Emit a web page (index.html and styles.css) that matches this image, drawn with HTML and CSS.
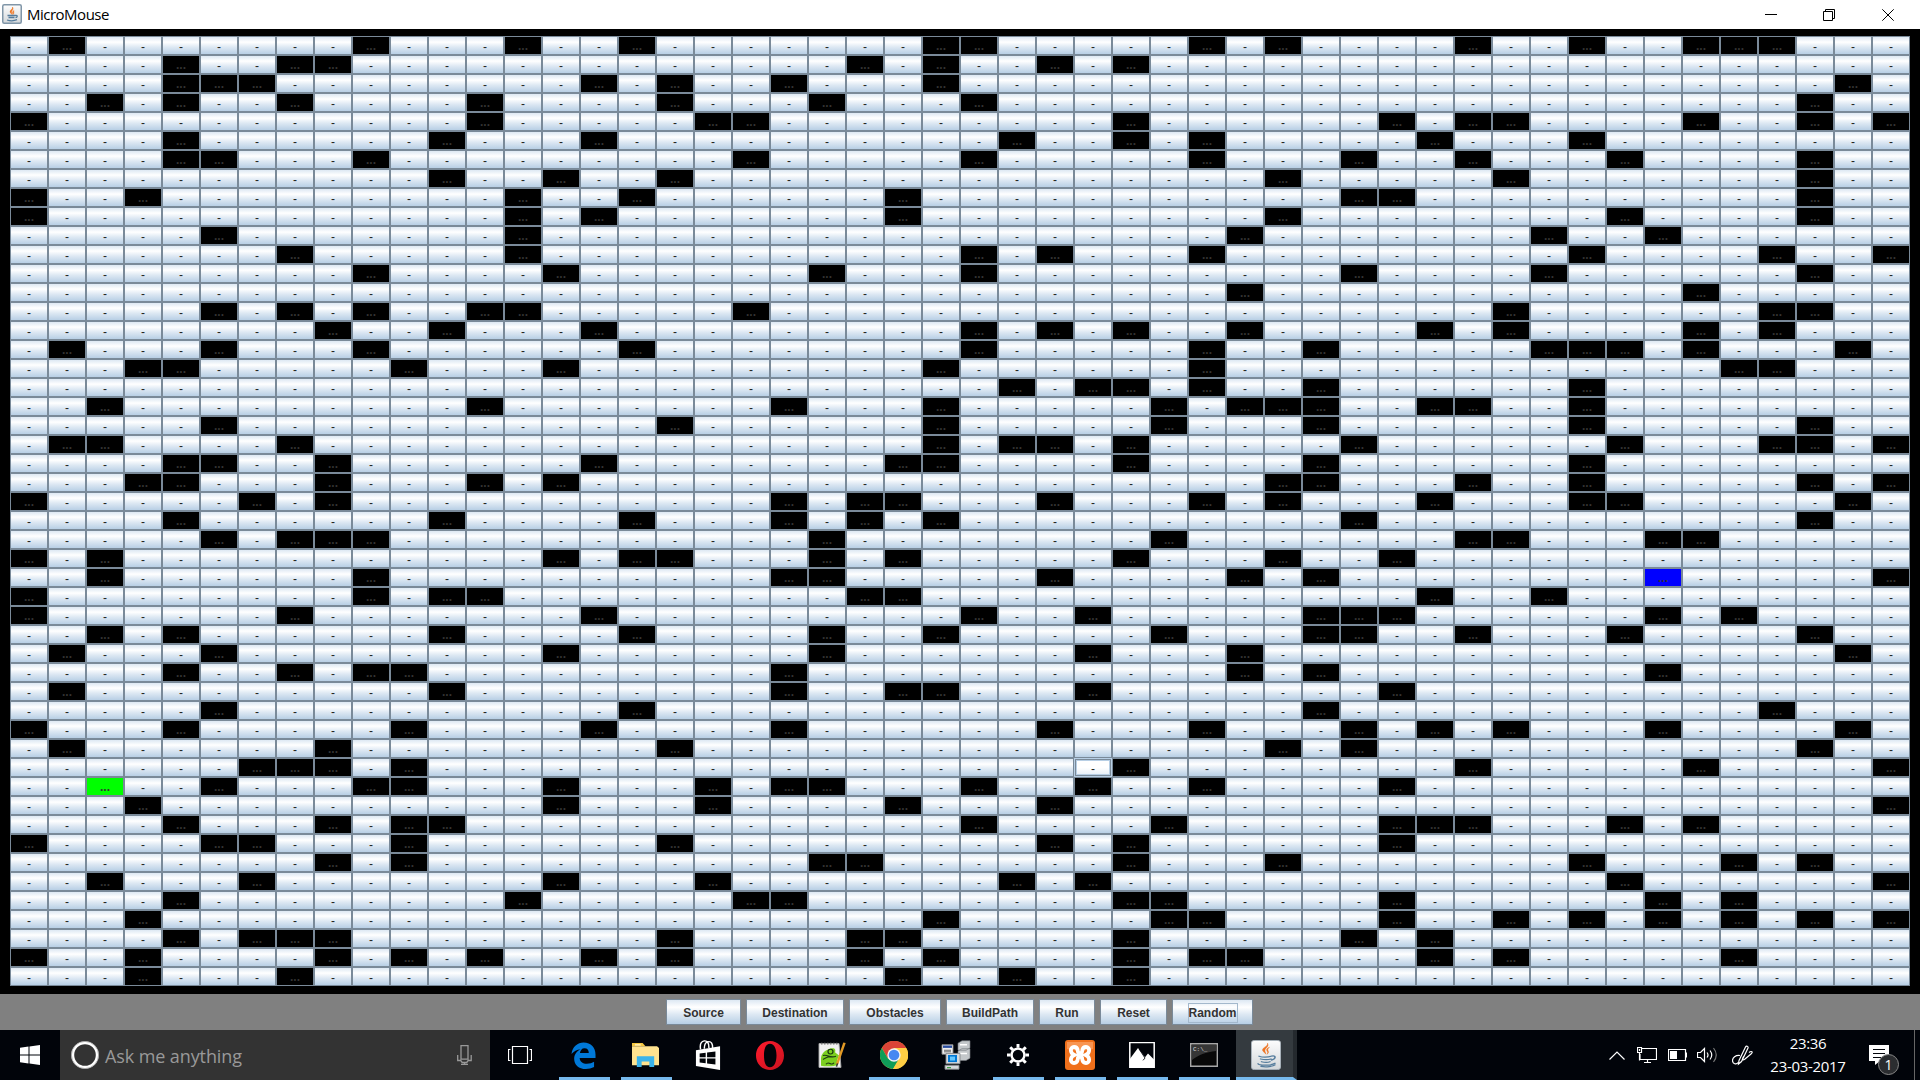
FILE: index.html
```html
<!DOCTYPE html>
<html lang="en">
<head>
<meta charset="utf-8">
<title>MicroMouse</title>
<link rel="stylesheet" href="styles.css">
</head>
<body>
<svg class="defs" width="0" height="0">
  <defs>
    <linearGradient id="tile" x1="0" y1="0" x2="0" y2="1"><stop offset="0" stop-color="#fdfdfd"/><stop offset="1" stop-color="#d3d7da"/></linearGradient>
    <linearGradient id="opera" x1="0" y1="0" x2="1" y2="1"><stop offset="0" stop-color="#ff1b2d"/><stop offset="1" stop-color="#c9131f"/></linearGradient>
  </defs>
</svg>

<header class="titlebar">
  <svg class="app-icon" viewBox="0 0 20 20">
    <rect x=".75" y=".75" width="18.500" height="18.500" rx="1.500" fill="url(#tile)" stroke="#8096a8" stroke-width="1.500"/>
    <path d="M10.500 3c.8 2-2.800 3-2.500 5 .2 1 1.500 1.500 2 2.500-.2-1.500-.6-2-.3-3C10 6.300 12 5 10.500 3zM12 6.500c-1.500 1-1.800 1.500-1 4 1.500-1.500.3-2.500 1-4z" fill="#ee7422" stroke="#ee7422" stroke-width=".5"/>
    <path d="M5.500 11.500h8M6.500 13.500h6M13.500 11.500c2.500-.5 2 2 0 2.200M5 16c3 1 7 1 10-.3" fill="none" stroke="#557c9c" stroke-width="1.300"/>
  </svg>
  <h1 class="title">MicroMouse</h1>
  <div class="controls">
    <svg viewBox="0 0 12 12"><path d="M0 5.500h12"/></svg>
    <svg class="restore" viewBox="0 0 12 12"><path d="M.5 2.500h9v9h-9zM2.500 2.500v-2h9v9h-2"/></svg>
    <svg viewBox="0 0 12 12"><path d="M.3.300l11.400 11.400M11.700.3L.3 11.700"/></svg>
  </div>
</header>

<main class="maze-frame"><div class="maze" id="maze"></div></main>

<nav class="toolbar">
  <button class="metal source">Source</button>
  <button class="metal destination">Destination</button>
  <button class="metal obstacles">Obstacles</button>
  <button class="metal build">BuildPath</button>
  <button class="metal run">Run</button>
  <button class="metal reset">Reset</button>
  <button class="metal random"><span class="focus-ring">Random</span></button>
</nav>

<footer class="taskbar">
  <div class="start"><svg width="20" height="20" viewBox="0 0 20 20"><path fill="#fff" d="M0 2.800L8.500 1.600V9.500H0zM9.500 1.500L20 0v9.500H9.500zM0 10.500h8.500v7.900L0 17.200zM9.500 10.500H20V20L9.500 18.500z"/></svg></div>
  <div class="search">
    <svg width="28" height="28" viewBox="0 0 28 28"><circle cx="14" cy="14" r="12.300" fill="none" stroke="#fff" stroke-width="3"/><circle cx="14" cy="14" r="13.600" fill="none" stroke="#999" stroke-width=".7"/></svg>
    <span class="prompt">Ask me anything</span>
    <svg class="mic" width="15" height="20" viewBox="0 0 15 20"><path d="M4 .7h7v13.500H4zM.7 10v5.500h3l1.500 2h4.500l1.500-2h3V10M7.500 17.500V20M4 19.300h7" fill="none" stroke="#999" stroke-width="1.300"/></svg>
  </div>
  <div class="task view"><svg width="24" height="18" viewBox="0 0 24 18"><path d="M4.500.5h15v17h-15zM2.500 3.500h-2v11h2M21.500 3.500h2v11h-2" fill="none" stroke="#fff" stroke-width="1.200"/></svg></div>
  <div class="apps">
    <div class="app open"><svg width="25" height="27" viewBox="0 0 26 28" preserveAspectRatio="none"><path fill="#0078d7" d="M.5 12.500C1.500 4.500 7 .5 13 .5c8 0 12.500 5.500 12.500 12.500v3.500H9c.2 4 3.300 6 7.500 6 3 0 5.500-.8 7.500-2v5.500c-2.500 1.300-5.500 2-8.500 2C8 28 3.300 23.500 3.300 17.500c0-4.500 2.500-8 6.700-10C6 8 3 9.500.5 12.500zM9.300 11.500h9.200c0-3-1.500-5-4.500-5-2.800 0-4.300 2.200-4.700 5z"/></svg></div>
    <div class="app open"><svg width="27" height="24" viewBox="0 0 28 29" preserveAspectRatio="none"><path fill="#f5c842" d="M0 0h11l3 4H0z"/><path fill="#ffe38f" d="M0 4h26l2 2v21H0z"/><path fill="#fff6d4" d="M3 1.500h6v1.500H3z"/><path fill="#3bb4ea" d="M5 16h18v13h-5v-6.500H10V29H5z"/></svg></div>
    <div class="app"><svg width="26" height="30" viewBox="0 0 28 38" preserveAspectRatio="none"><path d="M6 12C5 5 7 1.500 10 1c3-.3 5 2 5 9M10 11c0-6 2-9 5-9s4 3 4 8" fill="none" stroke="#fff" stroke-width="1.600"/><path fill="#fff" d="M1 13L27 8v30L1 33z"/><path fill="#02050a" d="M5 17l6.500-1v6H5zM13 15.800l9-1.300V22h-9zM5 23.500h6.500v6L5 28.500zM13 23.500h9v7.500l-9-1.300z"/></svg></div>
    <div class="app"><svg width="28" height="29" viewBox="0 0 28 36" preserveAspectRatio="none"><path fill="url(#opera)" fill-rule="evenodd" d="M14 0c8 0 14 8 14 18s-6 18-14 18S0 28 0 18 6 0 14 0zm0 3.500C9.500 3.500 8 10 8 18s1.500 14.500 6 14.500S20.500 26 20.500 18 18.500 3.500 14 3.500z"/></svg></div>
    <div class="app"><svg width="28" height="27" viewBox="0 0 28 34" preserveAspectRatio="none"><path fill="#f2f2f2" stroke="#aaa" d="M1 2h20l2 30H1z"/><path d="M3 2h17" stroke="#777" stroke-width="2" stroke-dasharray="1.500 1.500"/><path fill="#7ccf20" d="M3 20c1-7 5-10 10-12 4-1 5 2 4 5l4 4-2 6 1 6c-4 2-12 2-17 1z"/><path fill="none" stroke="#1d3b12" stroke-width="1.300" d="M5 17c5-2 6 4 13 1M5 22c4-3 5-4 11-3M10 12a2.500 3 0 1 0 5 0 2.500 3 0 0 0-5 0M8 28c3-5 5 3 8-2"/><path d="M26.500 1L19 28" stroke="#e29a25" stroke-width="2.500"/><path d="M19.500 27l-1 4" stroke="#333" stroke-width="1.500"/></svg></div>
    <div class="app open"><svg width="28" height="28" viewBox="0 0 28 28"><circle cx="14" cy="14" r="14" fill="#ffce44"/><path fill="#db4437" d="M1.800 7A14 14 0 0 1 26.200 7H14L7.900 17.500z"/><path fill="#0f9d58" d="M1.800 7A14 14 0 0 0 13 28l6-10.500H7.900z"/><path fill="#ffce44" d="M14 7h12.200A14 14 0 0 1 13 28l7-10.500z"/><circle cx="14" cy="14" r="6.700" fill="#f3f3f3"/><circle cx="14" cy="14" r="5.300" fill="#4688f1"/></svg></div>
    <div class="app"><svg width="30" height="30" viewBox="0 0 30 38" preserveAspectRatio="none"><path fill="#c3c7ca" stroke="#74797d" stroke-width=".7" d="M17 4l4-3h8v9l-4 3h-8zM17 14l4-3h8v12l-4 3h-8z"/><path d="M19 6h7M19 17h7" stroke="#fff" stroke-width="2"/><path fill="#eee" stroke="#888" d="M1 6h11v12H1z"/><path fill="#284b9d" d="M2 7h9v3H2z"/><path d="M3 13h7M3 15h7" stroke="#555"/><path fill="#d7dade" stroke="#85898c" d="M5 17h14v13H5zM4 32h14v5H4z"/><path fill="#0077d4" d="M7 19h9v9H7z"/><path fill="#64c7ff" d="M9 21h5v5H9z"/><path d="M6 35h4" stroke="#3b9c42" stroke-width="1.500"/></svg></div>
    <div class="app open"><svg width="22" height="22" viewBox="-12 -12 24 24"><g fill="none" stroke="#fff"><circle r="7" stroke-width="2.600"/><path stroke-width="3.200" d="M0-8V-12M0 8V12M8 0H12M-8 0H-12M5.600-5.600L8.500-8.500M-5.600-5.600L-8.500-8.500M5.600 5.600L8.500 8.500M-5.600 5.600L-8.500 8.500"/></g></svg></div>
    <div class="app open"><svg width="30" height="30" viewBox="0 0 30 30"><rect width="30" height="30" rx="3" fill="#f0701b"/><path d="M2 2h26v7c-8 2-18 2-26 0z" fill="#f89552"/><path d="M9.500 15C4.500 13 5 7 9 7c4 0 3.500 3 4 5 .3 1.500 3.700 1.500 4 0 .5-2 0-5 4-5s4.500 6-.5 8c5 2 4.500 8 .5 8s-3.500-3-4-5c-.3-1.500-3.700-1.500-4 0-.5 2 0 5-4 5s-4.500-6 .5-8z" fill="none" stroke="#fff" stroke-width="3.800"/></svg></div>
    <div class="app open"><svg width="26" height="26" viewBox="0 0 26 34" preserveAspectRatio="none"><path fill="none" stroke="#fff" stroke-width="1.500" d="M.8.800h24.400v32.400H.8z"/><path fill="#fff" d="M1 22l8-14 7 12 3-5 6 8v10H1z"/><path d="M10 9l6 12-2 3" stroke="#03070d" fill="none"/></svg></div>
    <div class="app open"><svg width="28" height="24" viewBox="0 0 28 24"><path d="M.7.700h26.600v22.600H.7z" fill="#080808" stroke="#a7a7a7" stroke-width="1.400"/><path d="M2 2h24v6C16 9 8 12 2 17z" fill="#555" fill-opacity=".6"/><text class="drive" x="3" y="8">C:\_</text></svg></div>
    <div class="app open active"><svg width="30" height="30" viewBox="0 0 30 38" preserveAspectRatio="none">
      <rect x=".5" y=".5" width="29" height="37" rx="3" fill="url(#tile)" stroke="#aab4bd"/>
      <path d="M16.500 4c1 4-5.500 5.500-5 9 .3 2 2.500 3 3.500 5-.5-2.500-1.500-3.500-1-5.500C14.500 10 18.500 8 16.500 4zM18.500 9c-2.500 1.500-3.500 3-2.500 5 .8 1.500 1 2.500 0 4 3-2.500.5-4.500.8-6 .2-1.200 1-2 1.700-3z" fill="#ee7422" stroke="#ee7422" stroke-width=".5"/>
      <path d="M8 20.500c3 1.200 9 1.200 13-.2M9.500 24c3.500 1 8 1 10.500 0M10.500 27.500c3 1 6.500 1 8.500 0M20.500 20.500c4.500-1.500 5 3 0 5M7 30c1 2.500 14 2.500 17-.5M10 33.500c5 1 12 .2 14-2" fill="none" stroke="#557c9c" stroke-width="1.500" stroke-linecap="round"/>
    </svg></div>
  </div>
  <div class="tray">
    <svg class="caret" width="16" height="9" viewBox="0 0 16 9"><path d="M.5 8.500L8 1l7.500 7.500"/></svg>
    <svg class="net" width="20" height="16" viewBox="0 0 20 16"><path d="M5 1.500h14.500v11H3V7M10.500 12.500v3M7 15.500h7M.5.500h4v5h-4zM2.500 5.500v8M2.500 2v2"/></svg>
    <svg class="battery" width="19" height="12" viewBox="0 0 19 12"><path d="M.5.500h17v11H.5zM18.500 3.500v5"/><path fill="#fff" stroke="none" d="M2 2h7v8H2z"/></svg>
    <svg class="volume" width="20" height="18" viewBox="0 0 20 18"><path d="M.5 6.500h3l4-4v13l-4-4h-3zM10 6.500q2 2.500 0 5M13 4.500q3.500 4.500 0 9"/><path stroke="#777" d="M16.500 2q5.500 7 0 14"/></svg>
    <svg class="pen" width="21" height="21" viewBox="0 0 21 21"><path d="M7 15.500L13.500 2c.8-1.500 3-.8 2.500 1L9.500 16.500 6.500 19zM8 10.500c-4.500-.5-7.500 2-7.500 5 0 3.500 4 4.500 5.500 2M12.500 10.500c-3 3.500-3 6 .5 3.500l6-5c2.500-2 .5-3.500-2-1.500"/></svg>
    <div class="clock"><span>23:36</span><span>23-03-2017</span></div>
    <div class="notes">
      <svg width="20" height="20" viewBox="0 0 20 20"><path fill="#fff" stroke="none" d="M0 0h20v16h-9l-5 4v-4H0z"/><path stroke="#02050a" d="M4 4.500h12M4 8.500h12M4 12.500h8"/></svg>
      <span class="badge">1</span>
    </div>
    <div class="desktop-edge"></div>
  </div>
</footer>
<script src="maze.js"></script>
</body>
</html>
```
FILE: maze.js
```js
// Blocked columns for each of the 50 rows.
const walls = [
  [1,9,13,16,24,25,31,33,38,41,44,45,46],
  [4,7,8,22,24,27,29],
  [4,5,6,15,17,20,24,48],
  [2,4,7,12,17,21,25,47],
  [0,12,18,19,29,36,38,39,44,47,49],
  [4,11,15,26,29,31,37,41],
  [4,5,9,19,25,31,35,38,42,47],
  [11,14,17,33,39,47],
  [0,3,13,16,23,35,36,47],
  [0,13,15,23,33,42,47],
  [5,13,32,40,43],
  [7,13,25,27,31,41,46,49],
  [9,14,21,25,35,40,47],
  [32,44],
  [5,7,9,12,13,19,39,46,47],
  [8,11,15,25,27,29,32,37,39,44,46],
  [1,5,9,16,25,31,34,40,41,42,44,48],
  [3,4,10,14,24,31,45,46],
  [26,28,29,31,34,41],
  [2,12,20,24,30,32,33,34,37,38,41],
  [5,17,24,30,34,41,47],
  [1,2,7,24,26,27,29,35,42,46,47,49],
  [4,5,8,15,23,24,29,34,41],
  [3,4,8,12,14,33,34,38,41,47,49],
  [0,6,8,20,22,23,27,31,33,37,41,42,48],
  [4,11,16,20,22,24,35,47],
  [5,7,8,9,21,30,38,39,43,44],
  [0,2,14,16,17,21,23,29,33,36],
  [2,9,20,21,27,32,34,49],
  [0,9,11,12,22,23,37,40],
  [0,7,15,25,28,34,35,36,43,45],
  [2,4,11,16,21,24,30,34,35,38,42,47],
  [1,5,14,21,28,32,48],
  [4,7,9,10,20,32,34,43],
  [1,11,20,23,24,28,36],
  [5,16,34,46],
  [0,4,10,15,20,27,31,35,37,39,43,48],
  [1,8,17,33,35,47],
  [6,7,8,10,29,38,44,49],
  [5,9,10,14,18,20,21,25,28,31,36],
  [3,14,18,23,27,49],
  [4,8,10,11,25,30,36,37,38,42,44],
  [0,5,6,10,17,27,29,36],
  [8,10,21,22,29,33,41,45,47],
  [2,6,14,18,26,28,42,49],
  [4,13,19,20,29,30,36,43,45],
  [3,24,30,31,36,39,41,43,45,47,49],
  [4,6,7,8,17,22,23,29,35,37],
  [0,3,8,10,12,15,17,22,24,29,31,32,37,39,45],
  [3,7,23,26,29]
];
const special = { "39,2": "source-cell", "28,43": "goal-cell", "38,28": "hover-cell" };

const maze = document.getElementById("maze");
walls.forEach((blocked, row) => {
  for (let col = 0; col < 50; col++) {
    const cell = document.createElement("div");
    const kind = special[row + "," + col];
    const wall = blocked.includes(col);
    const filled = wall || (kind && kind !== "hover-cell");
    cell.className = "cell " + (filled ? "filled" : "free") + (wall ? " wall" : "") + (kind ? " " + kind : "");
    cell.textContent = filled ? "..." : "-";
    maze.appendChild(cell);
  }
});
```
FILE: styles.css
```css
* { box-sizing: border-box; }
body {
  margin: 0;
  width: 1920px;
  height: 1080px;
  overflow: hidden;
  display: flex;
  flex-direction: column;
  background: #000;
  font-family: "Open Sans", "Noto Sans", sans-serif;
}
.defs { position: absolute; }
svg { display: block; flex: none; }

.titlebar {
  height: 29px;
  flex: none;
  display: flex;
  align-items: center;
  padding-left: 2px;
  background: #fff;
}
.app-icon { width: 20px; height: 20px; margin-bottom: 2px; }
.title { margin: 0 0 1px 5px; font-size: 15px; font-weight: 400; letter-spacing: -0.5px; color: #000; }
.controls { margin-left: auto; margin-right: 26px; display: flex; gap: 46px; }
.controls svg { width: 12px; height: 12px; fill: none; stroke: #000; stroke-width: 1; }
.controls .restore { margin-right: 1px; }

.maze-frame { height: 965px; flex: none; padding: 7px 10px 8px; background: #000; }
.maze { display: grid; grid-template-columns: repeat(50, 38px); grid-auto-rows: 19px; }
.cell, .metal {
  border: 1px solid #7a8a99;
  background: linear-gradient(#dde8f3, #fff 30%, #dde8f3 60%, #b8cfe5);
  color: #333;
  font: bold 12px "Liberation Sans", Arial, sans-serif;
  text-align: center;
}
.filled { line-height: 19px; }
.free { line-height: 20px; font-weight: 400; color: #222; }
.wall { background: #000; }
.source-cell { background: #0f0; }
.goal-cell { background: #00f; }
.hover-cell {
  border-color: #b8cfe5;
  background: linear-gradient(#fff 50%, #e4edf6);
  box-shadow: inset 0 0 0 1px #7a8a99, inset 0 0 0 2px #b8cfe5;
}

.toolbar {
  height: 36px;
  flex: none;
  display: flex;
  justify-content: center;
  gap: 5px;
  padding: 5px 1px 0 0;
  background: #808080;
}
.metal { height: 26px; padding: 2px 0 0; line-height: 22px; }
.source { width: 75px; }
.destination { width: 98px; }
.obstacles { width: 92px; }
.build { width: 88px; }
.run { width: 56px; }
.reset { width: 67px; }
.random { width: 81px; }
.focus-ring { display: inline-block; height: 18px; line-height: 18px; outline: 1px solid #a3b8cc; outline-offset: 0; }

.taskbar { height: 50px; flex: none; display: flex; background: #01040a; }
.start { width: 60px; display: flex; align-items: center; padding-left: 20px; }
.search { width: 430px; display: flex; align-items: center; padding: 0 18px 0 11px; background: #333; }
.prompt { margin: 1px 0 0 6px; font-size: 18px; letter-spacing: -0.1px; color: #999; }
.mic { margin-left: auto; }
.view { width: 69px; display: flex; align-items: center; padding-left: 18px; }
.apps { display: flex; gap: 11px; }
.app { width: 51px; height: 50px; display: flex; align-items: center; justify-content: center; padding-right: 2px; border-bottom: 3px solid transparent; }
.app svg { margin-top: 3px; }
.open { border-bottom-color: #76b9ed; }
.active { width: 61px; margin-left: -5px; padding: 0 0 0 3px; border-right: 4px solid #24292e; background: #343a3f; }
.drive { font: 6px "Liberation Mono", monospace; fill: #ddd; }

.tray { margin-left: auto; display: flex; align-items: center; }
.tray svg { fill: none; stroke: #fff; stroke-width: 1.2; }
.net { margin-left: 12px; }
.battery { margin-left: 11px; }
.volume { margin-left: 10px; }
.pen { margin-left: 15px; }
.clock { width: 84px; margin-left: 13px; display: flex; flex-direction: column; align-items: center; font-size: 15px; line-height: 23px; letter-spacing: -0.3px; color: #fff; }
.notes { position: relative; margin-left: 19px; }
.badge {
  position: absolute;
  left: 9px;
  top: 9px;
  width: 21px;
  height: 21px;
  border: 1px solid #888;
  border-radius: 50%;
  background: #2b2d30;
  color: #fff;
  font-size: 14px;
  line-height: 19px;
  text-align: center;
}
.desktop-edge { width: 1px; height: 50px; margin: 0 5px 0 25px; background: #666; }
```
